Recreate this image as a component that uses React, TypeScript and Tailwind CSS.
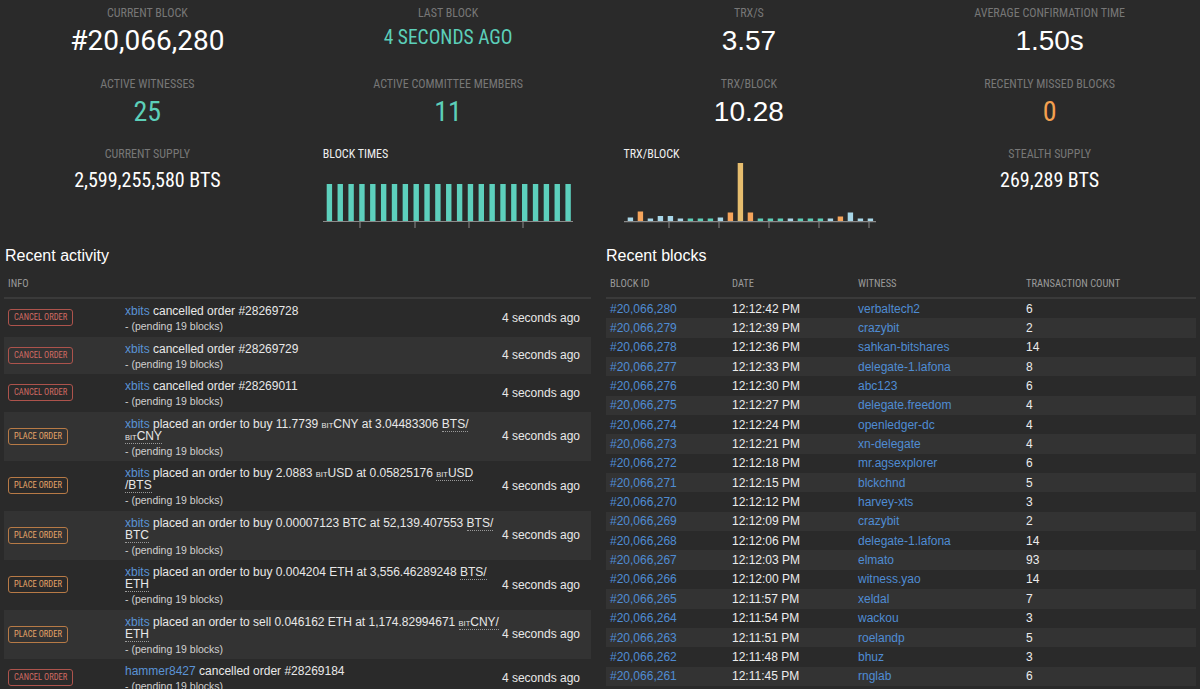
import React from "react";

const cond =
  "font-['Roboto_Condensed','Liberation_Sans_Narrow','Arial_Narrow',Roboto,sans-serif] font-stretch-condensed";
const arial = "font-['Liberation_Sans',Arial,sans-serif]";

const Stat = ({
  label,
  value,
  valueClass,
}: {
  label: string;
  value: string;
  valueClass: string;
}) => (
  <div className="flex h-[71px] flex-col items-center pt-[5px]">
    <div className={`${cond} text-[12px] leading-[16px] text-[#777777]`}>{label}</div>
    <div className={`mt-[4px] text-[28px] leading-[32px] ${valueClass}`}>{value}</div>
  </div>
);

const Supply = ({ label, value }: { label: string; value: string }) => (
  <div className="flex flex-col items-center pt-[4px]">
    <div className={`${cond} text-[12px] leading-[16px] text-[#777777]`}>{label}</div>
    <div className={`${cond} mt-[6px] text-[20px] leading-[24px] text-white`}>{value}</div>
  </div>
);

const BlockTimes = () => (
  <div className="flex flex-col px-[25px] pt-[4px]">
    <div className={`${cond} text-[12px] leading-[16px] text-[#eeeeee]`}>BLOCK TIMES</div>
    <svg width="250" height="72" className="block">
      {Array.from({ length: 23 }).map((_, i) => (
        <rect key={i} x={3.7 + i * 10.85} y={22} width={5.4} height={37.5} fill="#5dd0bd" />
      ))}
      <line x1="0" x2="250" y1="59.5" y2="59.5" stroke="#8a8a8a" strokeWidth="1.2" />
      {[37, 92, 146, 200].map((x) => (
        <line key={x} x1={x} x2={x} y1="59.5" y2="66" stroke="#8a8a8a" strokeWidth="1" />
      ))}
    </svg>
  </div>
);

const trx: [number, string][] = [
  [4, "#a7d6e8"], [10, "#f5a45b"], [3, "#a7d6e8"], [5.5, "#a7d6e8"], [5.5, "#a7d6e8"],
  [3, "#a7d6e8"], [3, "#5dcfb9"], [3, "#5dcfb9"], [3, "#5dcfb9"], [4, "#a7d6e8"],
  [9, "#f5a45b"], [58.5, "#e6bd6e"], [9, "#f5a45b"], [3, "#5dcfb9"], [3, "#5dcfb9"],
  [3, "#5dcfb9"], [3, "#a7d6e8"], [3, "#5dcfb9"], [3, "#5dcfb9"], [3, "#5dcfb9"],
  [3, "#a7d6e8"], [5, "#f5a45b"], [9, "#a7d6e8"], [3, "#a7d6e8"], [3, "#a7d6e8"],
];

const TrxChart = () => (
  <div className="flex flex-col px-[25px] pt-[4px]">
    <div className={`${cond} text-[12px] leading-[16px] text-[#eeeeee]`}>TRX/BLOCK</div>
    <svg width="252" height="72" className="block">
      {trx.map(([h, c], i) => (
        <rect key={i} x={3.7 + i * 10} y={59.5 - h} width={5.4} height={h} fill={c} />
      ))}
      <line x1="0" x2="252" y1="59.7" y2="59.7" stroke="#8a8a8a" strokeWidth="1.2" />
      {[45, 95, 145, 195, 245].map((x) => (
        <line key={x} x1={x} x2={x} y1="59.5" y2="66" stroke="#8a8a8a" strokeWidth="1" />
      ))}
    </svg>
  </div>
);

const Bit = ({ a }: { a: string }) => (
  <>
    <span className="text-[7.5px] leading-none">BIT</span>
    {a}
  </>
);

const Pair = ({ children }: { children: React.ReactNode }) => (
  <span className="border-b border-dotted border-[#9a9a9a]">{children}</span>
);

const Who = ({ n }: { n: string }) => <span className="text-[#5a93d6]">{n}</span>;

type Act = { kind: "cancel" | "place"; desc: React.ReactNode };

const activity: Act[] = [
  { kind: "cancel", desc: <><Who n="xbits" /> cancelled order #28269728</> },
  { kind: "cancel", desc: <><Who n="xbits" /> cancelled order #28269729</> },
  { kind: "cancel", desc: <><Who n="xbits" /> cancelled order #28269011</> },
  {
    kind: "place",
    desc: (
      <>
        <Who n="xbits" /> placed an order to buy 11.7739 <Bit a="CNY" /> at 3.04483306{" "}
        <Pair>BTS/<br /><Bit a="CNY" /></Pair>
      </>
    ),
  },
  {
    kind: "place",
    desc: (
      <>
        <Who n="xbits" /> placed an order to buy 2.0883 <Bit a="USD" /> at 0.05825176{" "}
        <Pair><Bit a="USD" /><br />/BTS</Pair>
      </>
    ),
  },
  {
    kind: "place",
    desc: (
      <>
        <Who n="xbits" /> placed an order to buy 0.00007123 BTC at 52,139.407553{" "}
        <Pair>BTS/<br />BTC</Pair>
      </>
    ),
  },
  {
    kind: "place",
    desc: (
      <>
        <Who n="xbits" /> placed an order to buy 0.004204 ETH at 3,556.46289248{" "}
        <Pair>BTS/<br />ETH</Pair>
      </>
    ),
  },
  {
    kind: "place",
    desc: (
      <>
        <Who n="xbits" /> placed an order to sell 0.046162 ETH at 1,174.82994671{" "}
        <Pair><Bit a="CNY" />/<br />ETH</Pair>
      </>
    ),
  },
  { kind: "cancel", desc: <><Who n="hammer8427" /> cancelled order #28269184</> },
];

const blocks: [string, string, string, string][] = [
  ["#20,066,280", "12:12:42 PM", "verbaltech2", "6"],
  ["#20,066,279", "12:12:39 PM", "crazybit", "2"],
  ["#20,066,278", "12:12:36 PM", "sahkan-bitshares", "14"],
  ["#20,066,277", "12:12:33 PM", "delegate-1.lafona", "8"],
  ["#20,066,276", "12:12:30 PM", "abc123", "6"],
  ["#20,066,275", "12:12:27 PM", "delegate.freedom", "4"],
  ["#20,066,274", "12:12:24 PM", "openledger-dc", "4"],
  ["#20,066,273", "12:12:21 PM", "xn-delegate", "4"],
  ["#20,066,272", "12:12:18 PM", "mr.agsexplorer", "6"],
  ["#20,066,271", "12:12:15 PM", "blckchnd", "5"],
  ["#20,066,270", "12:12:12 PM", "harvey-xts", "3"],
  ["#20,066,269", "12:12:09 PM", "crazybit", "2"],
  ["#20,066,268", "12:12:06 PM", "delegate-1.lafona", "14"],
  ["#20,066,267", "12:12:03 PM", "elmato", "93"],
  ["#20,066,266", "12:12:00 PM", "witness.yao", "14"],
  ["#20,066,265", "12:11:57 PM", "xeldal", "7"],
  ["#20,066,264", "12:11:54 PM", "wackou", "3"],
  ["#20,066,263", "12:11:51 PM", "roelandp", "5"],
  ["#20,066,262", "12:11:48 PM", "bhuz", "3"],
  ["#20,066,261", "12:11:45 PM", "rnglab", "6"],
];

const Badge = ({ kind }: { kind: "cancel" | "place" }) =>
  kind === "cancel" ? (
    <span
      className={`${cond} flex h-[17px] items-center rounded-[3px] border border-[#ad534c] px-[5px] text-[8.5px] text-[#d26b63]`}
    >
      CANCEL ORDER
    </span>
  ) : (
    <span
      className={`${cond} flex h-[17px] items-center rounded-[3px] border border-[#b77a46] px-[5px] text-[8.5px] text-[#e6a468]`}
    >
      PLACE ORDER
    </span>
  );

export default function App() {
  return (
    <div className={`min-h-screen bg-[#2a2a2a] text-[#e6e6e6] ${arial}`}>
      <div className="-ml-[3px] grid w-[1203px] grid-cols-4">
        <Stat label="CURRENT BLOCK" value="#20,066,280" valueClass="font-['Roboto',sans-serif] text-white" />
        <Stat
          label="LAST BLOCK"
          value="4 SECONDS AGO"
          valueClass={`${cond} !text-[19.5px] !leading-[26px] text-[#5ccfb9]`}
        />
        <Stat label="TRX/S" value="3.57" valueClass="text-white" />
        <Stat label="AVERAGE CONFIRMATION TIME" value="1.50s" valueClass="text-white" />
        <Stat label="ACTIVE WITNESSES" value="25" valueClass={`${cond} text-[#5ccfb9]`} />
        <Stat label="ACTIVE COMMITTEE MEMBERS" value="11" valueClass={`${cond} text-[#5ccfb9]`} />
        <Stat label="TRX/BLOCK" value="10.28" valueClass="text-white" />
        <Stat label="RECENTLY MISSED BLOCKS" value="0" valueClass={`${cond} text-[#f3a04f]`} />
        <div className="h-[98px]">
          <Supply label="CURRENT SUPPLY" value="2,599,255,580 BTS" />
        </div>
        <BlockTimes />
        <TrxChart />
        <Supply label="STEALTH SUPPLY" value="269,289 BTS" />
      </div>

      <div className="flex gap-[15px] px-[4px]">
        <div className="w-[587px]">
          <div className="mt-[6px] pl-[1px] text-[16px] leading-[20px] text-white">Recent activity</div>
          <div
            className={`${cond} border-b-2 border-[#3a3a3a] pb-[6px] pl-[4px] pt-[11px] text-[10.5px] leading-[14px] text-[#9a9a9a]`}
          >
            INFO
          </div>
          {activity.map((a, i) => (
            <div
              key={i}
              className={`grid grid-cols-[121px_375px_1fr] items-center ${i % 2 === 1 ? "bg-[#333333]" : ""}`}
            >
              <div className="pl-[4px]">
                <div className="flex">
                  <Badge kind={a.kind} />
                </div>
              </div>
              <div className="pb-[3.5px] pt-[6px]">
                <div className="text-[12px] leading-[12px] text-[#e8e8e8]">{a.desc}</div>
                <div className="mt-[2px] text-[10.5px] leading-[14px] text-[#d0d0d0]">- (pending 19 blocks)</div>
              </div>
              <div className="pr-[11px] text-right text-[12px] text-[#e8e8e8]">4 seconds ago</div>
            </div>
          ))}
        </div>

        <div className="flex-1">
          <div className="mt-[6px] text-[16px] leading-[20px] text-white">Recent blocks</div>
          <div
            className={`${cond} grid grid-cols-[122px_126px_168px_1fr] border-b-2 border-[#3a3a3a] pb-[6px] pt-[11px] text-[10.5px] leading-[14px] text-[#9a9a9a]`}
          >
            <div className="pl-[4px]">BLOCK ID</div>
            <div className="pl-[4px]">DATE</div>
            <div className="pl-[4px]">WITNESS</div>
            <div className="pl-[4px]">TRANSACTION COUNT</div>
          </div>
          {blocks.map((b, i) => (
            <div
              key={b[0]}
              className={`grid h-[19.35px] grid-cols-[122px_126px_168px_1fr] items-center text-[12px] ${i % 2 === 1 ? "bg-[#333333]" : ""}`}
            >
              <div className="pl-[4px] text-[#4f8cd3]">{b[0]}</div>
              <div className="pl-[4px] text-[#ececec]">{b[1]}</div>
              <div className="pl-[4px] text-[#4f8cd3]">{b[2]}</div>
              <div className="pl-[4px] text-[#ececec]">{b[3]}</div>
            </div>
          ))}
        </div>
      </div>
    </div>
  );
}
